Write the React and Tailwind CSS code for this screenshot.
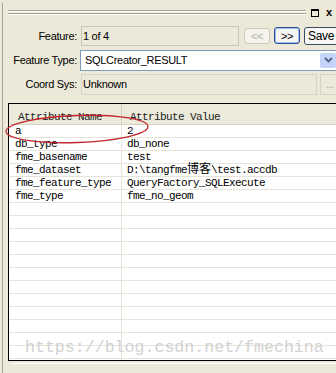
// Feature inspector panel: form fields on top, attribute table below

const rows = [
  ['a', '2'],
  ['db_type', 'db_none'],
  ['fme_basename', 'test'],
  ['fme_dataset', 'D:\\tangfme', '博客', '\\test.accdb'],
  ['fme_feature_type', 'QueryFactory_SQLExecute'],
  ['fme_type', 'fme_no_geom'],
];

const emptyRows = Array.from({ length: 14 });

const mono = { fontFamily: '"Liberation Mono", "Noto Sans CJK SC", monospace' };

const App = () => {
  return (
    <div
      className="relative w-[336px] h-[373px] overflow-hidden bg-[#ece9d8] text-[11px] text-black flex"
      style={{ fontFamily: '"Liberation Sans", Arial, sans-serif' }}
    >
      {/* left frame edge */}
      <div className="w-[2px] shrink-0" />
      <div className="w-px shrink-0 bg-[#aca899] mt-[3px]" />

      <div className="flex-1 flex flex-col min-w-0">
        {/* Title bar: grip + buttons */}
        <div className="h-[26px] flex items-start">
          <div className="ml-[5px] w-[298px] mt-[10px]">
            <div className="h-px bg-[#a6a392]" />
            <div className="h-px bg-white" />
            <div className="h-px" />
            <div className="h-px bg-[#a6a392]" />
            <div className="h-px bg-white" />
          </div>
          <div className="ml-[5px] mt-[9px] w-[8px] h-[8px] border border-black border-t-2" />
          <div className="ml-[6px] mt-[7px] w-[8px] h-[10px] flex items-center justify-center text-[11px] font-bold leading-none">x</div>
        </div>

        {/* Feature */}
        <div className="flex items-center h-[20px] tracking-[-0.3px]">
          <div className="w-[74px] text-right shrink-0">Feature:</div>
          <div className="ml-[4px] w-[158px] h-[20px] shrink-0 border border-[#cbc8b8] bg-[#ece9d8] pl-[1px] flex items-center">1 of 4</div>
          <div className="ml-[5px] w-[26px] h-[16px] shrink-0 rounded-[3px] border border-[#cdcabb] bg-[#f4f3ee] text-[#b0ad9d] flex items-center justify-center">&lt;&lt;</div>
          <div className="ml-[4px] w-[26px] h-[17px] shrink-0 rounded-[3px] border border-[#2c4f95] bg-[#f5f5f2] shadow-[inset_0_0_0_1px_#9fbcee] flex items-center justify-center">&gt;&gt;</div>
          <div className="ml-[4px] w-[40px] h-[18px] shrink-0 rounded-[3px] border border-[#3a4a63] bg-[#f7f7f3] flex items-center pl-[3px] text-[12px]">Save</div>
        </div>

        {/* Feature Type */}
        <div className="flex items-center h-[21px] mt-[4px] tracking-[-0.3px]">
          <div className="w-[74px] text-right shrink-0">Feature Type:</div>
          <div className="ml-[3px] w-[258px] h-[21px] shrink-0 border border-[#7f9db9] bg-white flex items-center">
            <div className="flex-1 pl-[4px]">SQLCreator_RESULT</div>
            <div className="w-[16px] h-[15px] mr-[1px] rounded-[2px] bg-[#c3d3fa] flex items-center justify-center">
              <svg width="9" height="6" viewBox="0 0 9 6">
                <path d="M1 1 L4.5 4.5 L8 1" fill="none" stroke="#4d6185" strokeWidth="1.8" />
              </svg>
            </div>
          </div>
        </div>

        {/* Coord Sys */}
        <div className="flex items-center h-[21px] mt-[3px] tracking-[-0.3px]">
          <div className="w-[74px] text-right shrink-0">Coord Sys:</div>
          <div className="ml-[4px] w-[236px] h-[21px] shrink-0 border border-[#d6d3c4] bg-[#ece9d8] pl-[1px] flex items-center">Unknown</div>
          <div className="ml-[3px] w-[20px] h-[21px] shrink-0 border border-[#d6d3c4] bg-[#ece9d8] text-[#aca899] flex items-end justify-center pb-[4px] text-[10px] leading-none">...</div>
        </div>

        {/* Attribute table */}
        <div className="mt-[8px] ml-[5px] h-[260px] border-t border-l border-b border-black bg-white overflow-hidden" style={mono}>
          <div className="flex h-[21px] bg-[#ebeadb] border-b border-[#d6d2c2] text-[11px] tracking-[-0.6px] text-[#222]">
            <div className="w-[113px] shrink-0 pl-[9px] pt-[5px] border-r border-[#d6d2c2]">Attribute Name</div>
            <div className="flex-1 pl-[8px] pt-[5px]">Attribute Value</div>
          </div>
          {rows.map(([name, ...value]) => (
            <div key={name} className="flex h-[13px] border-b border-[#e6e4d9] text-[11px] tracking-[-0.6px] leading-[12px]">
              <div className="w-[113px] shrink-0 pl-[6px] border-r border-[#e6e4d9] whitespace-nowrap">{name}</div>
              <div className="flex-1 pl-[5px] whitespace-nowrap">
                {value[0]}
                {value[1] && <span className="text-[12px] tracking-normal">{value[1]}</span>}
                {value[2]}
              </div>
            </div>
          ))}
          {emptyRows.map((_, i) => (
            <div key={i} className="flex h-[13px] border-b border-[#e6e4d9]">
              <div className="w-[113px] shrink-0 border-r border-[#e6e4d9]" />
              <div className="flex-1" />
            </div>
          ))}
        </div>

        {/* horizontal scrollbar strip */}
        <div className="ml-[5px] h-[12px] bg-[#ece9d8] flex">
          <div className="w-[4px]" />
          <div className="flex-1 mt-[2px] border-t border-white" />
        </div>
      </div>

      {/* watermark overlay */}
      <div
        className="absolute left-[25px] top-[340px] text-[16.6px] leading-none text-[#d2d2d2] whitespace-nowrap pointer-events-none"
        style={{ fontFamily: '"Liberation Mono", monospace' }}
      >
        https://blog.csdn.net/fmechina
      </div>

      {/* hand-drawn red ellipse overlay */}
      <svg className="absolute left-0 top-0 pointer-events-none" width="336" height="373">
        <ellipse cx="77" cy="129" rx="71" ry="13.5" fill="none" stroke="#c1262d" strokeWidth="1.3" transform="rotate(-2 77 129)" />
      </svg>
    </div>
  );
};

export default App;
